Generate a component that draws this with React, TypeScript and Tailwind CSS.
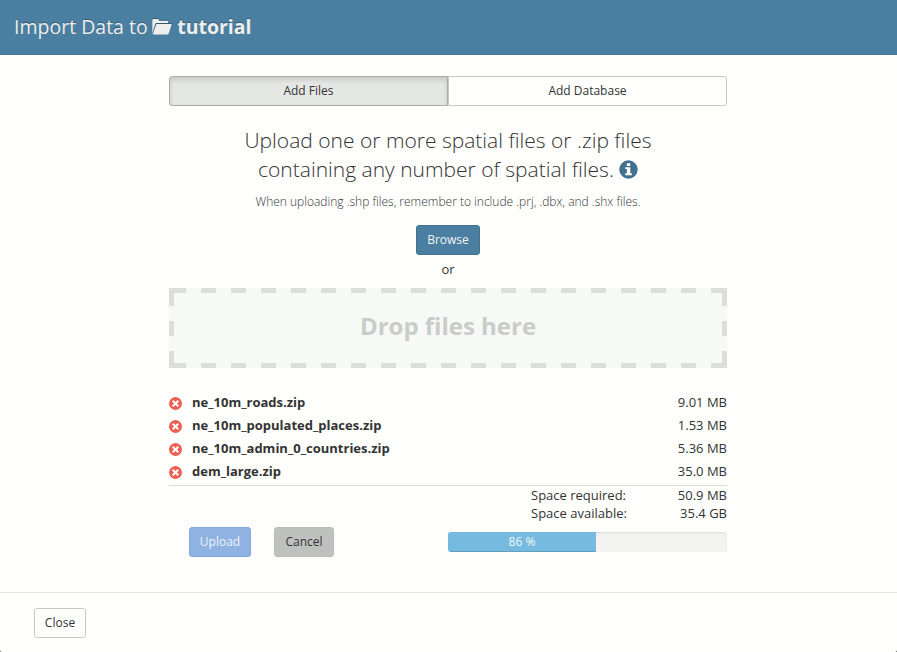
const files = [
  ['ne_10m_roads.zip', '9.01 MB'],
  ['ne_10m_populated_places.zip', '1.53 MB'],
  ['ne_10m_admin_0_countries.zip', '5.36 MB'],
  ['dem_large.zip', '35.0 MB'],
];

function FolderIcon() {
  return (
    <svg className="mr-[5px] ml-[4.5px] h-[18px] w-5 shrink-0 drop-shadow-[0_-1px_0_rgba(0,0,0,0.3)]" viewBox="0 0 20 18" fill="#eeefec">
      <path d="M0.300 16V2.200Q0.300 1 1.500 1H5.500Q6.500 1 6.800 2L7.100 2.700H15.300Q16.200 2.700 16.200 3.600V4.900H4.300Q3.300 4.900 3 5.900Z" />
      <path d="M4.900 6H18.800Q19.900 6 19.500 7L16.700 15.600Q16.300 16.600 15.300 16.600H0.800L4 6.700Q4.200 6 4.900 6Z" />
    </svg>
  );
}

function InfoIcon() {
  return (
    <svg className="ml-[5px] inline-block h-[19px] w-[19px] align-[-2px]" viewBox="0 0 19 19">
      <circle cx="9.500" cy="9.500" r="9.200" fill="#42718f" />
      <path fill="#fff" d="M7.800 3.200H11.200V5.900H7.800ZM6.200 7.200H11.300V13.200H12.900V15.200H6.200V13.200H7.900V9.100H6.200Z" />
    </svg>
  );
}

function RemoveIcon() {
  return (
    <svg className="mt-[3px] mr-[10px] h-[13px] w-[13px]" viewBox="0 0 13 13">
      <circle cx="6.500" cy="6.500" r="6.500" fill="#ee5f52" />
      <path d="M3.700 3.700L9.300 9.300M9.300 3.700L3.700 9.300" stroke="#fff" strokeWidth="2" />
    </svg>
  );
}

function DashedFrame() {
  return (
    <svg className="absolute inset-0 h-20 w-[558px]" viewBox="0 0 558 80" stroke="#dcdedb" strokeWidth="5" shapeRendering="crispEdges">
      <path d="M2 2.500H558M2 77.500H558M2.500 3V80M555.500 3V80" strokeDasharray="15 15" />
      <path d="M0 2.500H5M0 77.500H5M553 2.500H558M553 77.500H558" />
    </svg>
  );
}

export default function App() {
  return (
    <div className="h-[652px] w-[897px] bg-[#555]">
      <div className="flex h-[652px] w-[897px] flex-col overflow-hidden rounded-b-[2px] bg-[#fefffd] font-['Open_Sans',sans-serif] text-[13px] leading-[18px] text-[#333]">
        <header className="flex h-[55px] items-center border-b border-[#457693] bg-[#4a7fa2] pb-px pl-[14px] text-[19.5px] leading-[27px] text-[#eeefec] [text-shadow:0_-1px_0_rgba(0,0,0,0.3)]">
          <span>Import Data to</span>
          <FolderIcon />
          <b>tutorial</b>
        </header>

        <main className="ml-[169px] flex h-[537px] w-[558px] flex-col pt-[21px]">
          <div className="flex h-[30px] shrink-0 text-[12px]">
            <button className="w-[279px] rounded-l-[3px] border border-[#a9aca9] bg-[#e5e7e4] shadow-[inset_0_3px_5px_rgba(0,0,0,0.125)]">Add Files</button>
            <button className="flex-1 rounded-r-[3px] border border-[#c8cac7]">Add Database</button>
          </div>

          <h1 className="mt-5 text-center text-[21px] leading-[29px] font-light">
            Upload one or more spatial files or .zip files<br />
            containing any number of spatial files.<InfoIcon />
          </h1>
          <p className="mt-[9px] text-center text-[12px] leading-[18px] font-light">When uploading .shp files, remember to include .prj, .dbx, and .shx files.</p>
          <button className="mx-auto mt-[14px] h-[30px] w-16 shrink-0 rounded-[3px] border border-[#42718f] bg-[#4a7fa2] text-[12px] text-[#f2f5f4]">Browse</button>
          <p className="mt-[5px] text-center text-[13px]">or</p>
          <div className="relative mt-[10px] flex h-20 shrink-0 items-center justify-center bg-[#f7f9f6] pb-1 text-[24px] font-bold text-[#caccc9]">
            <DashedFrame />
            <span>Drop files here</span>
          </div>

          <ul className="mt-[22px] border-b border-[#d9dbd8] pb-[3px]">
            {files.map(([name, size]) => (
              <li key={name} className="flex h-[23px] items-center">
                <RemoveIcon />
                <b className="flex-1">{name}</b>
                <span>{size}</span>
              </li>
            ))}
          </ul>
          <dl className="ml-auto grid w-[196px] grid-cols-[1fr_auto]">
            <dt>Space required:</dt><dd className="text-right">50.9 MB</dd>
            <dt>Space available:</dt><dd className="text-right">35.4 GB</dd>
          </dl>
          <div className="mt-[5px] flex h-[30px] shrink-0 items-center pl-5 text-[12px]">
            <button className="h-[30px] w-[62px] rounded-[3px] border border-[#84a8dc] bg-[#8fb2e2] text-[#eef3f7]">Upload</button>
            <button className="ml-[23px] h-[30px] w-[60px] rounded-[3px] border border-[#bbbdba] bg-[#bfc1be]">Cancel</button>
            <div className="ml-auto h-5 w-[279px] overflow-hidden rounded-[3px] bg-[#f3f4f2] shadow-[inset_0_1px_2px_rgba(0,0,0,0.1)]">
              <div className="h-5 w-[148px] bg-[#76bbdf] text-center leading-5 text-[#f3f7f8] shadow-[inset_0_-1px_0_rgba(0,0,0,0.15)]">86 %</div>
            </div>
          </div>
        </main>

        <footer className="flex h-[60px] items-center border-t border-[#e3e5e2] pl-[34px]">
          <button className="h-[30px] w-[52px] rounded-[3px] border border-[#c8cac7] text-[12px]">Close</button>
        </footer>
      </div>
    </div>
  );
}
